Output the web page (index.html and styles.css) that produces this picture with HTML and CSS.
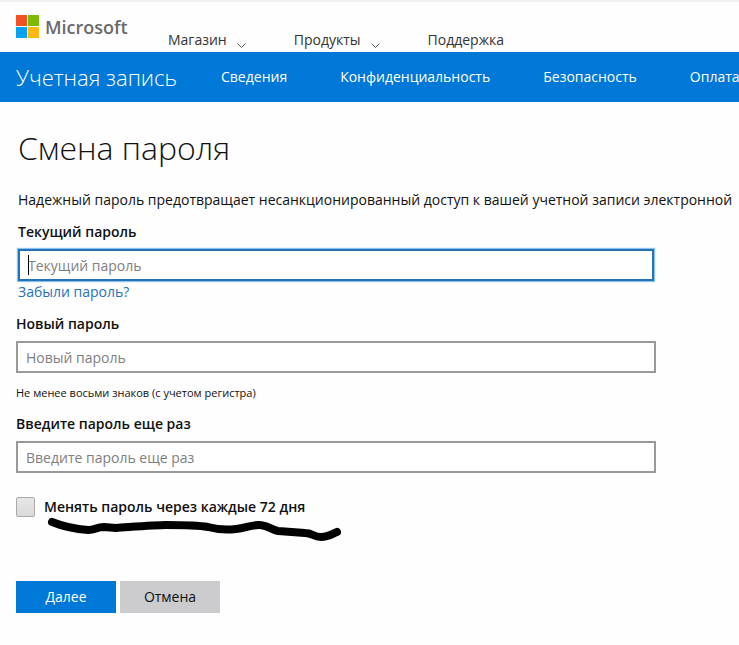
FILE: index.html
```html
<!DOCTYPE html>
<html lang="ru">
<head>
  <meta charset="UTF-8" />
  <meta name="viewport" content="width=device-width, initial-scale=1" />
  <title>Смена пароля</title>
  <link rel="stylesheet" href="styles.css">
</head>
<body>

<header class="top">
  <a href="#" class="logo">
    <svg width="24" height="24" viewBox="0 0 24 24" aria-hidden="true">
      <rect x="0" y="0" width="11" height="11" fill="#f05125" />
      <rect x="12" y="0" width="11" height="11" fill="#7eb908" />
      <rect x="0" y="12" width="11" height="11" fill="#05a3ee" />
      <rect x="12" y="12" width="11" height="11" fill="#fdb813" />
    </svg>
    <span>Microsoft</span>
  </a>
  <nav class="top-nav">
    <a href="#">Магазин
      <svg class="chevron" width="9" height="6" viewBox="0 0 9 6"><path d="M0.5 0.5 L4.5 4.5 L8.5 0.5" /></svg>
    </a>
    <a href="#">Продукты
      <svg class="chevron" width="9" height="6" viewBox="0 0 9 6"><path d="M0.5 0.5 L4.5 4.5 L8.5 0.5" /></svg>
    </a>
    <a href="#">Поддержка</a>
  </nav>
</header>

<nav class="bar">
  <a href="#" class="bar-title">Учетная запись</a>
  <a href="#">Сведения</a>
  <a href="#">Конфиденциальность</a>
  <a href="#">Безопасность</a>
  <a href="#">Оплата</a>
</nav>

<main>
  <h1>Смена пароля</h1>
  <p class="intro">Надежный пароль предотвращает несанкционированный доступ к вашей учетной записи электронной</p>

  <form>
    <div class="field current">
      <label for="current">Текущий пароль</label>
      <div class="input-wrap">
        <input type="text" id="current" class="focused" placeholder="Текущий пароль">
        <span class="caret"></span>
      </div>
      <a href="#" class="forgot">Забыли пароль?</a>
    </div>

    <div class="field">
      <label for="new">Новый пароль</label>
      <input type="text" id="new" placeholder="Новый пароль">
      <p class="hint">Не менее восьми знаков (с учетом регистра)</p>
    </div>

    <div class="field">
      <label for="repeat">Введите пароль еще раз</label>
      <input type="text" id="repeat" placeholder="Введите пароль еще раз">
    </div>

    <div class="check">
      <input type="checkbox" id="expire">
      <label for="expire">Менять пароль через каждые 72 дня</label>
      <svg class="marker" width="296" height="26" viewBox="0 0 296 26">
        <path d="M6 5 C16 9 28 12 42 13 C50 13 50 10 58 10 L70 11 C85 10 108 8 120 8 C135 8 150 8 162 10 C173 13 182 13 190 12 C200 11 204 8 213 8 C221 8 226 13 232 14 L259 16 C267 16 267 20 275 20 C282 20 286 17 291 15" />
      </svg>
    </div>

    <div class="buttons">
      <button type="submit" class="primary">Далее</button>
      <button type="button">Отмена</button>
    </div>
  </form>
</main>

</body>
</html>
```
FILE: styles.css
```css
* {
  box-sizing: border-box;
}
body {
  margin: 0;
  background: #fefefe;
  color: #111;
  font-family: "Open Sans", "Noto Sans", sans-serif;
  font-size: 14px;
  line-height: 20px;
  overflow-x: hidden;
}
a {
  text-decoration: none;
}

/* header */
.top {
  display: flex;
  height: 52px;
  padding: 0 16px;
  border-top: 2px solid #f0f0f0;
}
.logo {
  display: flex;
  gap: 5px;
  width: 152px;
  padding-top: 13px;
  color: #6a6a6a;
  font-size: 18px;
  font-weight: 600;
  line-height: 24px;
}
.top-nav {
  display: flex;
  align-items: flex-end;
  gap: 48px;
  padding-bottom: 2px;
}
.top-nav a {
  display: flex;
  align-items: flex-end;
  gap: 10px;
  color: #333;
}
.chevron {
  margin-bottom: 1px;
  fill: none;
  stroke: #555;
}

/* blue bar */
.bar {
  display: flex;
  align-items: center;
  gap: 53px;
  height: 50px;
  padding-left: 16px;
  background: #0078d7;
  overflow: hidden;
}
.bar a {
  flex: none;
  color: #fff;
}
.bar .bar-title {
  width: 152px;
  font-size: 22px;
  font-weight: 300;
  white-space: nowrap;
}

/* content */
main {
  padding: 22px 16px;
}
h1 {
  margin: 0 2px 18px;
  font-size: 32px;
  font-weight: 300;
  line-height: 48px;
}
.intro {
  margin: 0 -16px 12px 2px;
  white-space: nowrap;
  overflow: hidden;
}
.field {
  max-width: 640px;
  margin-bottom: 12px;
}
.current {
  padding: 0 2px;
}
.field label {
  display: block;
  margin-bottom: 7px;
  font-weight: 600;
}
.field input {
  display: block;
  width: 100%;
  height: 32px;
  padding: 0 8px;
  border: 2px solid #999;
  background: #fff;
  color: #111;
  font: inherit;
  outline: none;
}
.field input::placeholder {
  color: #808080;
  opacity: 1;
}
.field .focused {
  border-color: #2672b9;
  box-shadow: 0 0 1px 1px #8cc2f2;
}
.input-wrap {
  position: relative;
}
.caret {
  position: absolute;
  top: 6px;
  left: 10px;
  width: 1px;
  height: 20px;
  background: #000;
}
.forgot {
  display: block;
  margin-top: 1px;
  color: #2672b9;
}
.hint {
  margin: 11px 0 12px;
  font-size: 11px;
  line-height: 18px;
}
.check {
  position: relative;
  display: flex;
  align-items: center;
  gap: 9px;
  margin-top: 24px;
}
.check input {
  appearance: none;
  width: 19px;
  height: 20px;
  margin: 0;
  border: 1px solid #aaa;
  border-radius: 2px;
  background: linear-gradient(#e6e6e6, #dadada);
}
.check label {
  font-weight: 600;
}
.marker {
  position: absolute;
  top: 20px;
  left: 30px;
  fill: none;
  stroke: #000;
  stroke-width: 8;
  stroke-linecap: round;
  stroke-linejoin: round;
}
.buttons {
  display: flex;
  gap: 4px;
  margin-top: 64px;
}
button {
  width: 100px;
  height: 32px;
  padding: 0;
  border: 0;
  background: #cccbcd;
  color: #111;
  font: inherit;
}
.primary {
  background: #0078d7;
  color: #fff;
}
```
